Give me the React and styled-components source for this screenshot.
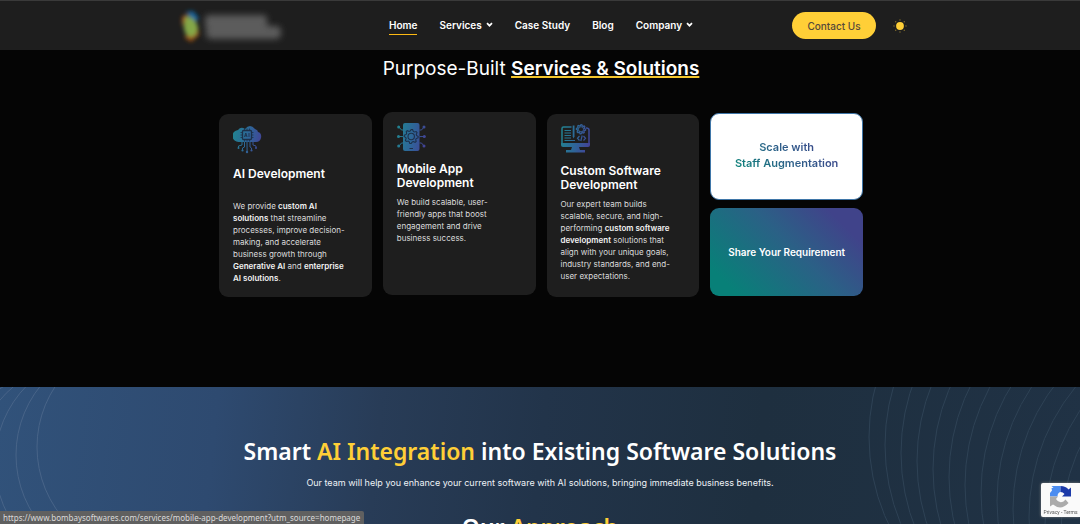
import React from "react";
import styled, { createGlobalStyle, css } from "styled-components";

const GlobalStyle = createGlobalStyle`
  *, *::before, *::after { box-sizing: border-box; }
  body {
    margin: 0;
    background: #050505;
    color: #fff;
    font-family: Inter, "Liberation Sans", sans-serif;
  }
  h2, h3, p { margin: 0; }
  a { color: inherit; text-decoration: none; }
  button { font: inherit; color: inherit; background: none; border: 0; padding: 0; cursor: pointer; }
`;

const Page = styled.div`
  height: 100vh;
  overflow: hidden;
  display: flex;
  flex-direction: column;
`;

const Header = styled.header`
  flex: none;
  height: 50px;
  display: grid;
  grid-template-columns: 389fr 403fr 288fr;
  align-items: center;
  background: #1e1e1e;
  border-top: 1px solid #3a3a3a;
`;

const LogoLink = styled.a`
  justify-self: end;
  display: block;
  margin-right: 88px;
  line-height: 0;
`;

const Nav = styled.nav`
  display: flex;
  align-items: center;
  gap: 22px;
`;

const navItem = css`
  display: flex;
  align-items: center;
  gap: 4px;
  font-size: 10px;
  font-weight: 600;
  line-height: 16px;
  padding-bottom: 1px;
  border-bottom: 1px solid ${(p) => (p.$active ? "#fdb913" : "transparent")};
`;
const NavLink = styled.a`${navItem}`;
const NavButton = styled.button`
  && { ${navItem} }
`;

const Actions = styled.div`
  display: flex;
  align-items: center;
  justify-content: flex-start;
  gap: 17px;
`;

const ContactButton = styled.button`
  && {
    width: 84px;
    height: 27px;
    border-radius: 14px;
    background: #ffcf37;
    color: #55483a;
    font-size: 10px;
    font-weight: 500;
  }
`;

const ThemeButton = styled.button`
  line-height: 0;
`;

const Services = styled.section`
  flex: none;
  width: 60%;
  max-width: 1288px;
  min-height: 337px;
  margin: 0 auto;
  padding: 7px 1px 90px 3px;
`;

const ServicesTitle = styled.h2`
  text-align: center;
  font-size: 19px;
  line-height: 24px;
  font-weight: 400;
  margin-bottom: 32px;
`;

const Underlined = styled.span`
  font-weight: 600;
  text-decoration: underline #f3c62c 2px;
  text-underline-offset: 1px;
  text-decoration-skip-ink: none;
`;

const Cards = styled.div`
  display: grid;
  grid-template-columns: repeat(4, 1fr);
  gap: 11px;
`;

const Card = styled.article`
  min-height: 183px;
  margin-top: 1px;
  padding: 10px 14px;
  border-radius: 9px;
  background: #1e1e1e;
  transform: ${(p) => (p.$raised ? "translateY(-2px)" : "none")};
`;

const CardTitle = styled.h3`
  min-height: 28px;
  margin-top: ${(p) => (p.$short ? "13px" : "10px")};
  margin-bottom: ${(p) => (p.$short ? "5px" : "6px")};
  font-size: 12px;
  line-height: 14px;
  font-weight: 600;
`;

const CardText = styled.p`
  font-size: 8px;
  line-height: 12px;
  color: #dcdcdc;
  white-space: nowrap;
  strong { font-weight: 600; color: #f2f2f2; }
`;

const Tiles = styled.div`
  display: grid;
  grid-template-rows: 87px 88px;
  gap: 8px;
`;

const tile = css`
  display: flex;
  align-items: center;
  justify-content: center;
  border-radius: 9px;
  font-weight: 600;
  text-align: center;
  white-space: nowrap;
`;

const ScaleTile = styled.a`
  ${tile}
  border: 1px solid #3f76a8;
  padding-bottom: 3px;
  background: #fff;
  font-size: 11px;
  line-height: 16px;
`;

const GradientText = styled.span`
  background: linear-gradient(45deg, #0a8578 0%, #2c6289 45%, #413f8c 100%);
  background-clip: text;
  color: transparent;
`;

const ShareTile = styled.a`
  ${tile}
  background: linear-gradient(45deg, #088078 12%, #2b6086 55%, #40438a 85%);
  font-size: 10px;
`;

const Integration = styled.section`
  position: relative;
  flex: 1;
  overflow: hidden;
  padding: 48px 0 0;
  text-align: center;
  background: linear-gradient(96deg, #31527a 0%, #2e4a70 20%, #283c57 35%, #22344a 50%, #1e2f3f 70%, #203245 100%);
`;

const Arcs = styled.svg`
  position: absolute;
  top: 0;
  ${(p) => p.$side}: 0;
  fill: none;
  stroke: ${(p) => (p.$side === "left" ? "#486488" : "#2e4255")};
`;

const IntegrationTitle = styled.h2`
  position: relative;
  font-family: "Noto Sans", sans-serif;
  font-size: 23px;
  line-height: 32px;
  font-weight: 600;
`;

const Accent = styled.span`
  color: #ffcf37;
`;

const IntegrationText = styled.p`
  position: relative;
  margin: 10px 0 22px;
  font-size: 9px;
  line-height: 12px;
  color: #eef2f6;
`;

const StatusBar = styled.div`
  position: fixed;
  left: 0;
  bottom: 0;
  height: 13px;
  padding: 0 4px 0 3px;
  border-radius: 0 2px 0 0;
  background: #606060;
  color: #dadada;
  font: 8px/13px "Noto Sans", sans-serif;
  white-space: nowrap;
`;

const Captcha = styled.aside`
  position: fixed;
  right: 0;
  bottom: 7px;
  width: 39px;
  height: 34px;
  padding-top: 3px;
  border-radius: 2px 0 0 2px;
  background: #fafafa;
  box-shadow: 0 0 3px #808080;
  display: flex;
  flex-direction: column;
  align-items: center;
  gap: 1px;
  font: 5px/6px Roboto, sans-serif;
  color: #555;
  white-space: nowrap;
`;

const Logo = () => (
  <svg width="136" height="46" viewBox="0 0 136 46" aria-hidden="true">
    <defs>
      <filter id="soft" x="-30%" y="-30%" width="160%" height="160%"><feGaussianBlur stdDeviation="3" /></filter>
      <filter id="softMark" x="-40%" y="-40%" width="180%" height="180%"><feGaussianBlur stdDeviation="2" /></filter>
    </defs>
    <g filter="url(#softMark)">
      <path d="M21 9 28 8 34 15 30 20Z" fill="#17649a" />
      <path d="M17 14 23 11 17 24Z" fill="#a65a22" />
      <path d="M33 24 34 32 26 39 19 34Z" fill="#985018" />
      <path d="M21 13Q28 13 33 23Q33 33 26 34Q15 31 21 13Z" fill="#84a747" />
    </g>
    <g fill="#5c5c5c" filter="url(#soft)">
      <rect x="40" y="12" width="62" height="14" rx="4" />
      <rect x="41" y="23" width="75" height="13" rx="5" />
    </g>
  </svg>
);

const Chevron = () => (
  <svg width="7" height="6" viewBox="0 0 7 6" aria-hidden="true">
    <path d="M1 1.2 3.5 3.7 6 1.2" fill="none" stroke="#fff" strokeWidth="1.7" />
  </svg>
);

const Sun = () => (
  <svg width="14" height="14" viewBox="0 0 14 14" aria-hidden="true">
    <circle cx="7" cy="7" r="3.9" fill="#ffcf37" />
    <g fill="#8a742e">
      {[0, 45, 90, 135, 180, 225, 270, 315].map((a) => (
        <circle key={a} cx="7" cy="1" r=".65" transform={`rotate(${a} 7 7)`} />
      ))}
    </g>
  </svg>
);

const Gradient = ({ id }) => (
  <linearGradient id={id} gradientUnits="userSpaceOnUse" x1="0" y1="12" x2="30" y2="18">
    <stop stopColor="#228291" />
    <stop offset=".5" stopColor="#2e6598" />
    <stop offset="1" stopColor="#444096" />
  </linearGradient>
);

const CardIcon = styled.svg`
  display: block;
  width: 30px;
  height: 30px;
`;

const CloudIcon = () => (
  <CardIcon viewBox="0 0 30 30" aria-hidden="true">
    <defs><Gradient id="cloud" /></defs>
    <g fill="url(#cloud)">
      <path d="M6 18A6 6 0 0 1 5 6Q8 2 12 5Q17-1 22 5Q25 6 25 8Q29 9 28 14Q27 18 23 18Z" />
      <circle cx="5.5" cy="24" r="1" /><circle cx="9.5" cy="26.5" r="1.1" />
      <circle cx="14" cy="28" r="1.2" /><circle cx="18.5" cy="26.5" r="1.1" /><circle cx="23" cy="24" r="1" />
    </g>
    <g stroke="url(#cloud)" fill="none">
      <path d="M9 18V21L5.5 22V24M11.5 18V23L9.5 24V26M14 18 14.1 27M17 18V23L18.5 24V26M20 18V21L23 22V24" />
    </g>
    <g fill="none" stroke="#1d304a">
      <rect x="9.5" y="6.5" width="9" height="9" rx="1" strokeWidth="1.3" />
      <path d="M11.5 4.5V6.5M14 4.5V6.5M16.5 4.5V6.5M11.5 15.5V17.5M14 15.5V17.5M16.5 15.5V17.5M7.5 8.5H9.5M7.5 11H9.5M7.5 13.5H9.5M18.5 8.5H20.5M18.5 11H20.5M18.5 13.5H20.5" strokeWidth=".8" />
      <path d="M11.5 13 12.8 9 14.1 13M12 11.8H13.6M16 9V13" strokeWidth=".9" />
    </g>
  </CardIcon>
);

const gear = (cx, cy, r) =>
  Array.from({ length: 32 }, (_, i) => {
    const a = (i * Math.PI) / 16;
    const d = i % 4 < 2 ? r : r * 0.78;
    return `${i ? "L" : "M"}${(cx + d * Math.cos(a)).toFixed(2)} ${(cy + d * Math.sin(a)).toFixed(2)}`;
  }).join("") + "Z";

const PhoneIcon = () => (
  <CardIcon viewBox="0 0 30 30" aria-hidden="true">
    <defs><Gradient id="phone" /></defs>
    <rect x="6" y="1" width="16.5" height="28" rx="2" fill="url(#phone)" />
    <g fill="url(#phone)">
      <circle cx="1.7" cy="5" r="1.5" /><circle cx="1.5" cy="14.5" r="1.5" /><circle cx="1.7" cy="24" r="1.5" />
      <circle cx="27" cy="5" r="1.5" /><circle cx="27.3" cy="14.5" r="1.5" /><circle cx="27" cy="24" r="1.5" />
    </g>
    <path d="M2 5 4.5 8H6M2 14.5 6 14.6M2 24 4.5 21H6M27 5 24.5 8H22.5M27 14.5 22.5 14.6M27 24 24.5 21H22.5" fill="none" stroke="url(#phone)" />
    <path d={gear(14.2, 14.5, 7)} fill="none" stroke="#1d304a" strokeWidth="1.1" />
    <circle cx="14.2" cy="14.5" r="3.2" fill="none" stroke="#1d304a" strokeWidth="1.1" />
    <path d="M12.5 26.5H16" stroke="#1d304a" />
  </CardIcon>
);

const MonitorIcon = () => (
  <CardIcon viewBox="0 0 30 30" aria-hidden="true">
    <defs><Gradient id="monitor" /></defs>
    <g fill="none" stroke="url(#monitor)">
      <path d="M10.5 3H2.5Q1 3 1 4.5V19M25 4Q28 4 28 6V19" strokeWidth="1.5" />
      <path d="M3.5 6.5H10M3.5 9H10M3.5 11.5H10M3.5 14H10M3.5 16.5H14" />
      <path d={gear(20, 5.3, 4.6)} strokeWidth="1.3" />
      <circle cx="20" cy="5.3" r="2.6" />
      <path d="M18.5 12 16.5 14.3 18.5 16.5M22.5 12 24.5 14.3 22.5 16.5M21.2 11.5 19.8 17" strokeWidth="1.2" />
    </g>
    <g fill="url(#monitor)">
      <path d="M11.7 1.5H13.5V12.5L12.6 14.5 11.7 12.5Z" />
      <path d="M0 19H29V21Q29 23 27 23H2Q0 23 0 21Z" />
      <path d="M11 23H18L19 26H24V28.5H5V26H10Z" />
    </g>
  </CardIcon>
);

const CaptchaLogo = () => (
  <svg width="23" height="22" viewBox="0 0 23 22" aria-hidden="true">
    <path d="M11.5 0V6Q8.5 6.5 8.5 10.5H1V7L3 4.5 2.5 2 4.5 2 2.5 0Z" fill="#4a8cf0" />
    <path d="M11.5 0Q17 0 19.5 3.5L22 1.5V10.5H13L15.5 8Q14 6 11.5 6Z" fill="#1c3aa9" />
    <path d="M1 10.5H9L7 13Q10 18 14.5 15.5L16.5 13.5 19.5 17Q12 25 4 18.5L1 20.5Z" fill="#ababab" />
  </svg>
);

const leftArcs = [0, 1, 2, 3, 4];
const rightArcs = [0, 1, 2, 3, 4, 5, 6, 7, 8, 9, 10, 11, 12];

export default function App() {
  return (
    <Page>
      <GlobalStyle />
      <Header>
        <LogoLink href="#home" aria-label="Home page"><Logo /></LogoLink>
        <Nav aria-label="Main">
          <NavLink href="#home" $active aria-current="page">Home</NavLink>
          <NavButton type="button">Services <Chevron /></NavButton>
          <NavLink href="#case-study">Case Study</NavLink>
          <NavLink href="#blog">Blog</NavLink>
          <NavButton type="button">Company <Chevron /></NavButton>
        </Nav>
        <Actions>
          <ContactButton type="button">Contact Us</ContactButton>
          <ThemeButton type="button" aria-label="Switch theme"><Sun /></ThemeButton>
        </Actions>
      </Header>

      <Services>
        <ServicesTitle>Purpose-Built <Underlined>Services &amp; Solutions</Underlined></ServicesTitle>
        <Cards>
          <Card>
            <CloudIcon />
            <CardTitle $short>AI Development</CardTitle>
            <CardText>
              We provide <strong>custom AI<br />solutions</strong> that streamline<br />
              processes, improve decision-<br />making, and accelerate<br />
              business growth through<br /><strong>Generative AI</strong> and <strong>enterprise<br />AI solutions</strong>.
            </CardText>
          </Card>
          <Card $raised>
            <PhoneIcon />
            <CardTitle>Mobile App<br />Development</CardTitle>
            <CardText>
              We build scalable, user-<br />friendly apps that boost<br />engagement and drive<br />business success.
            </CardText>
          </Card>
          <Card>
            <MonitorIcon />
            <CardTitle>Custom Software<br />Development</CardTitle>
            <CardText>
              Our expert team builds<br />scalable, secure, and high-<br />
              performing <strong>custom software<br />development</strong> solutions that<br />
              align with your unique goals,<br />industry standards, and end-<br />user expectations.
            </CardText>
          </Card>
          <Tiles>
            <ScaleTile href="#staff"><GradientText>Scale with<br />Staff Augmentation</GradientText></ScaleTile>
            <ShareTile href="#share">Share Your Requirement</ShareTile>
          </Tiles>
        </Cards>
      </Services>

      <Integration>
        <Arcs $side="left" width="80" height="137" viewBox="0 387 80 137" aria-hidden="true">
          {leftArcs.map((i) => <circle key={i} cx={147 - 21 * i} cy={447 + 8 * i} r="110" />)}
        </Arcs>
        <Arcs $side="right" width="220" height="137" viewBox="860 387 220 137" aria-hidden="true">
          {rightArcs.map((i) => <circle key={i} cx={1074 + 16 * i} cy={437 + 8 * i} r="205" />)}
        </Arcs>
        <IntegrationTitle>Smart <Accent>AI Integration</Accent> into Existing Software Solutions</IntegrationTitle>
        <IntegrationText>Our team will help you enhance your current software with AI solutions, bringing immediate business benefits.</IntegrationText>
        <IntegrationTitle>Our <Accent>Approach</Accent></IntegrationTitle>
      </Integration>

      <StatusBar>https://www.bombaysoftwares.com/services/mobile-app-development?utm_source=homepage</StatusBar>
      <Captcha>
        <CaptchaLogo />
        <span><a href="#privacy">Privacy</a> - <a href="#terms">Terms</a></span>
      </Captcha>
    </Page>
  );
}
